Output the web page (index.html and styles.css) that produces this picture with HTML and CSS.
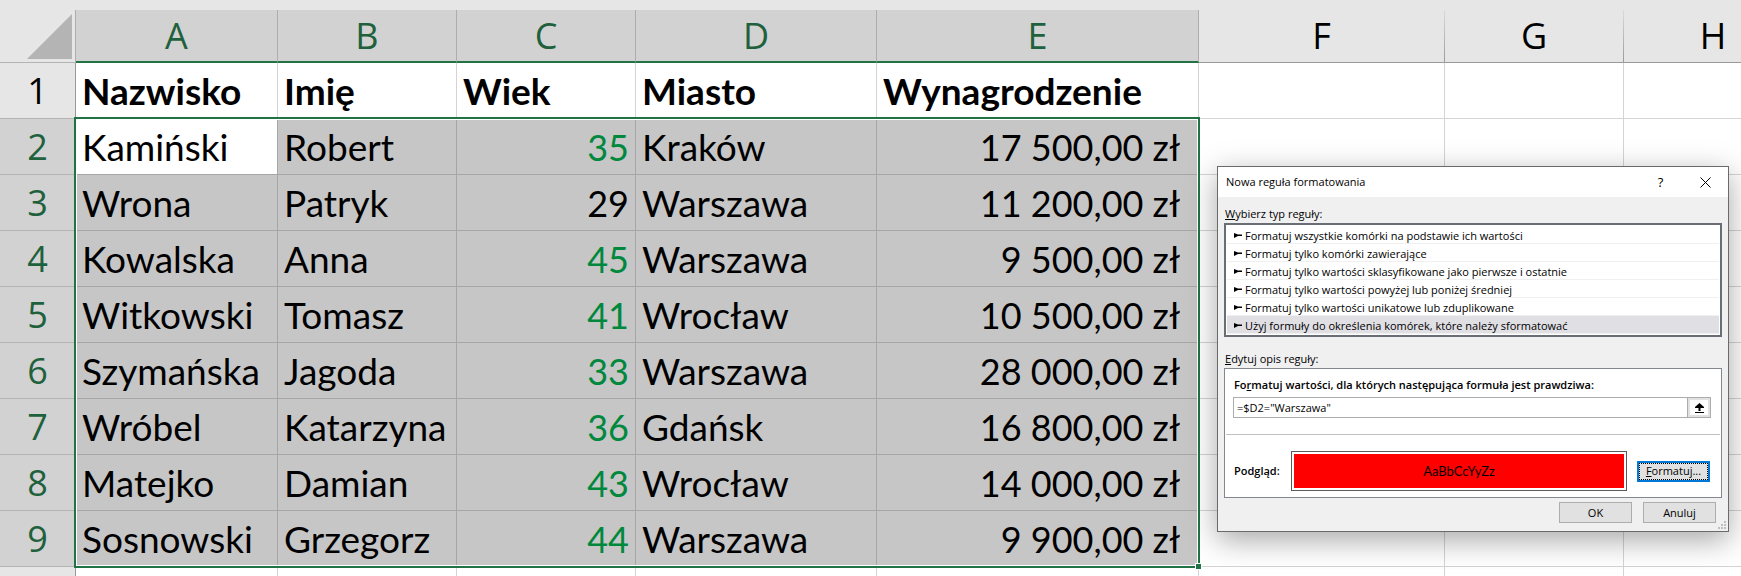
FILE: index.html
```html
<!DOCTYPE html>
<html lang="pl">
<head>
    <meta charset="UTF-8">
    <meta name="viewport" content="width=device-width, initial-scale=1.0">
    <title>Nowa reguła formatowania</title>
    <link rel="stylesheet" href="styles.css">
</head>
<body>
    <main class="sheet">
        <table class="grid">
            <colgroup>
                <col class="col-head">
                <col class="col-a">
                <col class="col-m">
                <col class="col-m">
                <col class="col-d">
                <col class="col-e">
                <col class="col-f">
                <col class="col-m">
                <col class="col-m">
            </colgroup>
            <thead>
                <tr>
                    <th class="corner"><svg width="45" height="45" viewBox="0 0 45 45"><path d="M45 0V45H0Z" fill="#b4b4b4"/></svg></th>
                    <th class="on">A</th>
                    <th class="on">B</th>
                    <th class="on">C</th>
                    <th class="on">D</th>
                    <th class="on">E</th>
                    <th>F</th>
                    <th>G</th>
                    <th>H</th>
                </tr>
            </thead>
            <tbody class="titles">
                <tr><th>1</th><td>Nazwisko</td><td>Imię</td><td>Wiek</td><td>Miasto</td><td>Wynagrodzenie</td><td></td><td></td><td></td></tr>
            </tbody>
            <tbody class="selected">
                <tr><th>2</th><td class="active">Kamiński</td><td>Robert</td><td class="age green">35</td><td>Kraków</td><td class="pay">17 500,00 zł</td><td class="out"></td><td class="out"></td><td class="out"></td></tr>
                <tr><th>3</th><td>Wrona</td><td>Patryk</td><td class="age">29</td><td>Warszawa</td><td class="pay">11 200,00 zł</td><td class="out"></td><td class="out"></td><td class="out"></td></tr>
                <tr><th>4</th><td>Kowalska</td><td>Anna</td><td class="age green">45</td><td>Warszawa</td><td class="pay">9 500,00 zł</td><td class="out"></td><td class="out"></td><td class="out"></td></tr>
                <tr><th>5</th><td>Witkowski</td><td>Tomasz</td><td class="age green">41</td><td>Wrocław</td><td class="pay">10 500,00 zł</td><td class="out"></td><td class="out"></td><td class="out"></td></tr>
                <tr><th>6</th><td>Szymańska</td><td>Jagoda</td><td class="age green">33</td><td>Warszawa</td><td class="pay">28 000,00 zł</td><td class="out"></td><td class="out"></td><td class="out"></td></tr>
                <tr><th>7</th><td>Wróbel</td><td>Katarzyna</td><td class="age green">36</td><td>Gdańsk</td><td class="pay">16 800,00 zł</td><td class="out"></td><td class="out"></td><td class="out"></td></tr>
                <tr><th>8</th><td>Matejko</td><td>Damian</td><td class="age green">43</td><td>Wrocław</td><td class="pay">14 000,00 zł</td><td class="out"></td><td class="out"></td><td class="out"></td></tr>
                <tr><th>9</th><td>Sosnowski</td><td>Grzegorz</td><td class="age green">44</td><td>Warszawa</td><td class="pay">9 900,00 zł</td><td class="out"></td><td class="out"></td><td class="out"></td></tr>
            </tbody>
            <tbody>
                <tr><th></th><td></td><td></td><td></td><td></td><td></td><td></td><td></td><td></td></tr>
            </tbody>
        </table>

        <section class="dialog" role="dialog" aria-labelledby="dialogTitle">
            <header class="titlebar">
                <span id="dialogTitle" class="title">Nowa reguła formatowania</span>
                <button class="tool" type="button">?</button>
                <button class="tool" type="button" aria-label="Zamknij">
                    <svg width="11" height="11" viewBox="0 0 11 11"><path d="M.5 .5L10.500 10.500M10.500 .5L.5 10.500" stroke="#000"/></svg>
                </button>
            </header>

            <div class="label"><u>W</u>ybierz typ reguły:</div>
            <ul class="rules">
                <li><svg class="mark" viewBox="0 0 8 5"><path d="M0 0L4 1.500H8V3H4L0 5Z"/></svg>Formatuj wszystkie komórki na podstawie ich wartości</li>
                <li><svg class="mark" viewBox="0 0 8 5"><path d="M0 0L4 1.500H8V3H4L0 5Z"/></svg>Formatuj tylko komórki zawierające</li>
                <li><svg class="mark" viewBox="0 0 8 5"><path d="M0 0L4 1.500H8V3H4L0 5Z"/></svg>Formatuj tylko wartości sklasyfikowane jako pierwsze i ostatnie</li>
                <li><svg class="mark" viewBox="0 0 8 5"><path d="M0 0L4 1.500H8V3H4L0 5Z"/></svg>Formatuj tylko wartości powyżej lub poniżej średniej</li>
                <li><svg class="mark" viewBox="0 0 8 5"><path d="M0 0L4 1.500H8V3H4L0 5Z"/></svg>Formatuj tylko wartości unikatowe lub zduplikowane</li>
                <li class="chosen"><svg class="mark" viewBox="0 0 8 5"><path d="M0 0L4 1.500H8V3H4L0 5Z"/></svg>Użyj formuły do określenia komórek, które należy sformatować</li>
            </ul>

            <div class="label second"><u>E</u>dytuj opis reguły:</div>
            <div class="edit">
                <label class="bold" for="formula">Fo<u>r</u>matuj wartości, dla których następująca formuła jest prawdziwa:</label>
                <div class="formula">
                    <input type="text" id="formula" value="=$D2=&quot;Warszawa&quot;">
                    <button type="button" aria-label="Zwiń okno">
                        <svg width="9" height="10" viewBox="0 0 9 10"><path d="M4.500 0L9 4V5H5.500V8H3.500V5H0V4ZM0 9H9V10H0Z"/></svg>
                    </button>
                </div>
                <div class="preview-row">
                    <span class="bold">Podgląd:</span>
                    <div class="preview"><div class="sample">AaBbCcYyZz</div></div>
                    <button class="btn focused" type="button"><u>F</u>ormatuj...</button>
                </div>
            </div>

            <footer class="actions">
                <button class="btn" type="button">OK</button>
                <button class="btn" type="button">Anuluj</button>
            </footer>
            <svg class="grip" width="8" height="8" viewBox="0 0 8 8"><path d="M6 0h2v2H6zM3 3h2v2H3zM6 3h2v2H6zM0 6h2v2H0zM3 6h2v2H3zM6 6h2v2H6z" fill="#bfbfbf"/></svg>
        </section>
    </main>
</body>
</html>
```
FILE: styles.css
```css
*,
*::before,
*::after {
    box-sizing: border-box;
}

body {
    margin: 0;
    background-color: #e6e6e6;
    font-family: Lato, sans-serif;
}

.sheet {
    position: relative;
    height: 100vh;
    padding-top: 10px;
    overflow: hidden;
}

/* spreadsheet */
.grid {
    table-layout: fixed;
    width: 1803px;
    border-collapse: separate;
    border-spacing: 0;
    font-size: 37px;
    line-height: 44px;
    color: #000;
}

.col-head { width: 76px; }
.col-a { width: 202px; }
.col-m { width: 179px; }
.col-d { width: 241px; }
.col-e { width: 322px; }
.col-f { width: 246px; }

.grid th {
    padding: 0;
    font-family: "Open Sans", sans-serif;
    font-size: 36px;
    font-weight: normal;
    text-align: center;
    background-color: #e6e6e6;
    border-right: 1px solid #999;
    border-bottom: 1px solid #b4b4b4;
}

.grid td {
    height: 56px;
    padding: 0 6px;
    white-space: nowrap;
    background-color: #fff;
    border-right: 1px solid #d4d4d4;
    border-bottom: 1px solid #d4d4d4;
}

.grid thead th {
    height: 53px;
    border-bottom: 1px solid #999;
    border-right: 1px solid;
    border-image: linear-gradient(#dcdcdc, #999) 1;
}

.grid thead .on {
    color: #1e613c;
    background-color: #d2d2d2;
    border-image: none;
    border-right-color: #adadad;
    border-bottom: 2px solid #217346;
}

.grid thead .corner {
    padding: 4px 3px 0 0;
    text-align: right;
    vertical-align: top;
    border-image: none;
    border-right-color: #adadad;
    border-bottom-color: #b4b4b4;
}

.corner svg {
    display: block;
    margin-left: auto;
}

.titles td {
    font-weight: bold;
}

.selected {
    position: relative;
}

.selected th {
    color: #1e613c;
    background-color: #d2d2d2;
}

.selected td {
    background-color: #c6c6c6;
    border-color: #a6a6a6;
}

.selected .active,
.selected .out {
    background-color: #fff;
}

.selected .out {
    border-color: #d4d4d4;
}

.selected .age {
    text-align: right;
    font-size: 36px;
}

.selected .green {
    color: #00883c;
}

.selected .pay {
    text-align: right;
    padding-right: 18px;
    font-size: 36px;
}

/* frame and fill handle of the selected range */
.selected::before {
    content: "";
    position: absolute;
    left: 74px;
    top: -2px;
    bottom: -1px;
    width: 1126px;
    border: 2px solid #217346;
    box-shadow: inset 0 0 0 1px #fff;
}

.selected::after {
    content: "";
    position: absolute;
    left: 1195px;
    bottom: -3px;
    width: 7px;
    height: 7px;
    background-color: #217346;
    border: 1px solid #fff;
}

/* dialog */
.dialog {
    position: absolute;
    top: 166px;
    right: 12px;
    width: 512px;
    padding: 0 6px 8px;
    font-family: "Open Sans", sans-serif;
    font-size: 11px;
    line-height: 16px;
    color: #000;
    background-color: #f0f0f0;
    border: 1px solid #6a6a6a;
    box-shadow: 0 8px 28px rgba(0, 0, 0, 0.35);
}

.dialog button,
.dialog input {
    margin: 0;
    font: inherit;
    color: #000;
}

.titlebar {
    display: flex;
    align-items: center;
    height: 30px;
    margin: 0 -6px;
    padding-left: 8px;
    background-color: #fff;
}

.title {
    flex: 1;
}

.dialog .tool {
    display: flex;
    align-items: center;
    justify-content: center;
    width: 45px;
    height: 30px;
    padding: 0;
    font-size: 13px;
    background: none;
    border: none;
}

.label {
    padding: 9px 1px 1px;
}

.second {
    padding-top: 14px;
}

.rules {
    margin: 0;
    padding: 1px;
    list-style: none;
    background-color: #fff;
    border: 2px solid #696d75;
}

.rules li {
    display: flex;
    align-items: center;
    gap: 3px;
    height: 18px;
    padding: 2px 0 0 7px;
    border-bottom: 1px solid #f0f0f0;
}

.rules .chosen {
    background-color: #e0dfe4;
}

.mark {
    width: 8px;
    height: 5px;
}

.edit {
    padding: 8px 1px 6px;
    background-color: #fff;
    border: 1px solid #828790;
}

.bold {
    font-weight: 600;
}

.edit > .bold {
    display: block;
    padding-left: 8px;
}

.formula {
    display: flex;
    height: 21px;
    margin: 4px 9px 16px 7px;
    border: 1px solid #acacac;
}

.formula input {
    flex: 1;
    min-width: 0;
    padding: 1px 3px 0;
    border: none;
    outline: none;
}

.formula button {
    display: flex;
    align-items: center;
    justify-content: center;
    width: 22px;
    padding: 0;
    background-color: #fff;
    border: 2px solid #e1e1e1;
    outline: 1px solid #acacac;
}

.preview-row {
    display: flex;
    align-items: center;
    gap: 10px;
    padding: 16px 10px 0 8px;
    border-top: 1px solid #c0c0c0;
}

.preview-row .bold {
    width: 47px;
}

.preview {
    flex: 1;
    padding: 2px;
    border: 1px solid #5a5a5a;
}

.sample {
    height: 34px;
    font-family: Lato, sans-serif;
    font-size: 13px;
    line-height: 34px;
    text-align: center;
    background-color: #f00;
}

.btn {
    width: 73px;
    height: 21px;
    padding: 0;
    text-align: center;
    background-color: #e1e1e1;
    border: 1px solid #adadad;
}

.focused {
    border: 2px solid #0078d7;
    outline: 1px dotted #000;
    outline-offset: -3px;
}

.actions {
    display: flex;
    justify-content: flex-end;
    gap: 11px;
    padding: 4px 6px 0 0;
}

.grip {
    position: absolute;
    right: 2px;
    bottom: 2px;
}
```
